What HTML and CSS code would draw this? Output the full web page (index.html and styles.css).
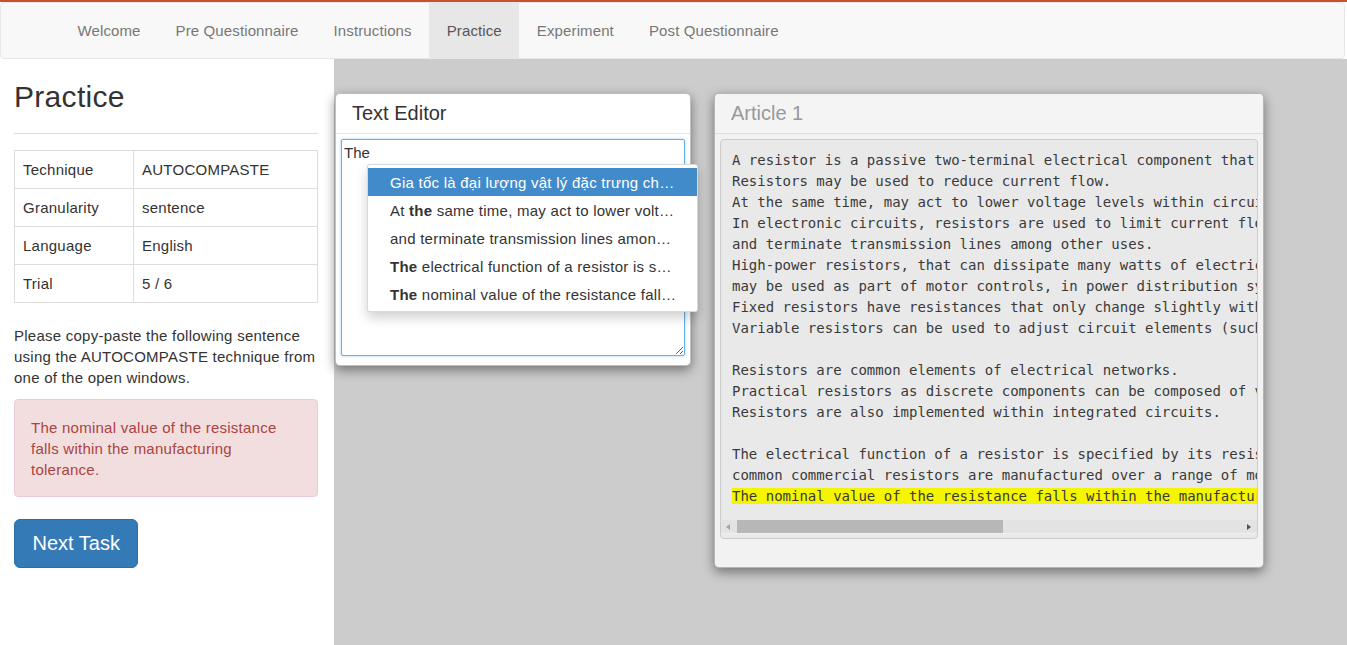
FILE: index.html
```html
<!DOCTYPE html>
<html lang="en">
<head>
<meta charset="utf-8">
<title>Practice</title>
<link rel="stylesheet" href="styles.css">
</head>
<body>
<div class="topline"></div>
<nav class="navbar">
  <ul class="nav">
    <li><a href="#">Welcome</a></li>
    <li><a href="#">Pre Questionnaire</a></li>
    <li><a href="#">Instructions</a></li>
    <li class="active"><a href="#">Practice</a></li>
    <li><a href="#">Experiment</a></li>
    <li><a href="#">Post Questionnaire</a></li>
  </ul>
</nav>
<div class="main">
  <aside class="sidebar">
    <h1 class="title">Practice</h1>
    <hr class="rule">
    <table class="info">
      <tr><td class="key">Technique</td><td>AUTOCOMPASTE</td></tr>
      <tr><td class="key">Granularity</td><td>sentence</td></tr>
      <tr><td class="key">Language</td><td>English</td></tr>
      <tr><td class="key">Trial</td><td>5 / 6</td></tr>
    </table>
    <p class="instructions">Please copy-paste the following sentence using the AUTOCOMPASTE technique from one of the open windows.</p>
    <div class="alert">The nominal value of the resistance falls within the manufacturing tolerance.</div>
    <button class="btn-next">Next Task</button>
  </aside>
  <section class="canvas">
    <div class="window editor-window">
      <div class="win-header">Text Editor</div>
      <div class="win-body">
        <textarea class="editor">The</textarea>
      </div>
      <ul class="dropdown">
        <li class="selected">Gia tốc là đại lượng vật lý đặc trưng ch…</li>
        <li>At <b>the</b> same time, may act to lower volt…</li>
        <li>and terminate transmission lines amon…</li>
        <li><b>The</b> electrical function of a resistor is s…</li>
        <li><b>The</b> nominal value of the resistance fall…</li>
      </ul>
    </div>
    <div class="window article-window">
      <div class="win-header inactive">Article 1</div>
      <div class="win-body article-body">
        <div class="pre">
          <div class="pre-text">A resistor is a passive two-terminal electrical component that implements electrical resistance as a circuit element.
Resistors may be used to reduce current flow.
At the same time, may act to lower voltage levels within circuits.
In electronic circuits, resistors are used to limit current flow, to adjust signal levels, to bias active elements,
and terminate transmission lines among other uses.
High-power resistors, that can dissipate many watts of electrical power as heat,
may be used as part of motor controls, in power distribution systems, or as test loads for generators.
Fixed resistors have resistances that only change slightly with temperature, time or operating voltage.
Variable resistors can be used to adjust circuit elements (such as a volume control or a lamp dimmer).

Resistors are common elements of electrical networks.
Practical resistors as discrete components can be composed of various compounds and forms.
Resistors are also implemented within integrated circuits.

The electrical function of a resistor is specified by its resistance:
common commercial resistors are manufactured over a range of more than nine orders of magnitude.
<span class="hl">The nominal value of the resistance falls within the manufacturing tolerance.                                  </span></div>
          <div class="hscroll">
            <span class="arrow-left"></span>
            <span class="thumb"></span>
            <span class="arrow-right"></span>
          </div>
        </div>
      </div>
    </div>
  </section>
</div>
</body>
</html>
```

FILE: styles.css
```css
* { box-sizing: border-box; }
html, body { margin: 0; padding: 0; }
body {
  font-family: "Liberation Sans", Arial, sans-serif;
  font-size: 15px;
  line-height: 21px;
  letter-spacing: 0.25px;
  color: #333;
  background: #fff;
  height: 645px;
  overflow: hidden;
  display: flex;
  flex-direction: column;
}
.topline { height: 2px; background: #c4532c; flex: none; }
.navbar {
  flex: none;
  background: #f8f8f8;
  border: 1px solid #e7e7e7;
  border-radius: 4px;
  margin-right: 2px;
  padding-left: 59px;
}
.nav { list-style: none; margin: 0; padding: 0; display: flex; }
.nav a {
  display: block;
  padding: 17px 17.5px;
  color: #777;
  text-decoration: none;
  line-height: 21px;
  letter-spacing: 0.12px;
}
.nav .active a { background: #e7e7e7; color: #555; }

.main { flex: 1; display: flex; min-height: 0; }
.sidebar {
  width: 334px;
  flex: none;
  padding: 0 16px 0 14px;
  background: #fff;
}
.title {
  font-size: 30px;
  font-weight: 500;
  line-height: 33px;
  letter-spacing: 0.3px;
  margin: 21px 0 0;
  color: #333;
}
.rule { border: 0; border-top: 1px solid #ddd; margin: 20px 0 16px; }
.info {
  width: 100%;
  border-collapse: collapse;
  border: 1px solid #ddd;
  margin-bottom: 22px;
}
.info td { border: 1px solid #ddd; padding: 8px; line-height: 21px; }
.info .key { width: 119px; }
.instructions { margin: 0 0 11px; }
.alert {
  background: #f2dede;
  border: 1px solid #ebccd1;
  color: #a94442;
  border-radius: 4px;
  padding: 17px 30px 16px 16px;
  margin-bottom: 22px;
}
.btn-next {
  font-family: inherit;
  font-size: 20px;
  line-height: 25px;
  letter-spacing: 0;
  padding: 11px 17.5px;
  color: #fff;
  background: #337ab7;
  border: 1px solid #2e6da4;
  border-radius: 6px;
}

.canvas { flex: 1; background: #cccccc; position: relative; }
.window {
  position: absolute;
  top: 34px;
  background: #fff;
  border: 1px solid rgba(0,0,0,0.25);
  border-radius: 5px;
  box-shadow: 0 4px 12px rgba(0,0,0,0.45);
}
.editor-window { left: 1px; width: 356px; height: 273px; }
.article-window { left: 380px; width: 550px; height: 475px; background: #f2f2f2; overflow: hidden; }
.win-header {
  font-size: 20px;
  line-height: 22px;
  letter-spacing: 0;
  padding: 8px 16px 9px;
  border-bottom: 1px solid #e5e5e5;
  color: #333;
}
.win-header.inactive { color: #999; background: #f4f4f4; border-bottom-color: #ddd; }
.win-body { padding: 5px; }
.editor {
  display: block;
  width: 344px;
  height: 217px;
  margin: 0;
  padding: 2px 2px;
  font-family: inherit;
  font-size: 15px;
  line-height: 21px;
  color: #333;
  border: 1px solid #66afe9;
  border-radius: 2px;
  box-shadow: 0 0 3px rgba(102,175,233,0.6);
  outline: none;
}
.dropdown {
  position: absolute;
  left: 31px;
  top: 70px;
  width: 331px;
  margin: 0;
  padding: 3px 0;
  list-style: none;
  background: #fff;
  border: 1px solid rgba(0,0,0,0.15);
  border-radius: 3px;
  box-shadow: 0 6px 12px rgba(0,0,0,0.18);
}
.dropdown li {
  padding: 3.5px 16px 3.5px 22px;
  white-space: nowrap;
  overflow: hidden;
  color: #333;
}
.dropdown li b { font-weight: 700; }
.dropdown li.selected { background: #428bca; color: #fff; }

.article-body { padding: 5px 5px 0; }
.pre {
  background: #e9e9e9;
  border: 1px solid #cccccc;
  border-radius: 4px;
  height: 400px;
  overflow: hidden;
}
.pre-text {
  font-family: "DejaVu Sans Mono", "Liberation Mono", monospace;
  font-size: 14px;
  line-height: 21px;
  letter-spacing: 0;
  color: #3a3a3a;
  white-space: pre;
  overflow: hidden;
  padding: 10px 0 12px 11px;
  height: 380px;
}
.hl { background: #f5f500; }
.hscroll {
  display: flex;
  align-items: center;
  height: 14px;
  background: #e3e3e3;
  border-bottom: 1px solid #f0f0f0;
}
.arrow-left, .arrow-right { width: 16px; height: 14px; flex: none; position: relative; }
.arrow-left::after, .arrow-right::after {
  content: "";
  position: absolute;
  top: 4px;
  width: 0; height: 0;
  border-top: 3px solid transparent;
  border-bottom: 3px solid transparent;
}
.arrow-left::after { left: 5px; border-right: 4px solid #a3a3a3; }
.arrow-right::after { right: 6px; border-left: 4px solid #505050; }
.thumb { width: 266px; height: 13px; background: #b7b7b7; flex: none; }
.hscroll .arrow-right { margin-left: auto; }
```
